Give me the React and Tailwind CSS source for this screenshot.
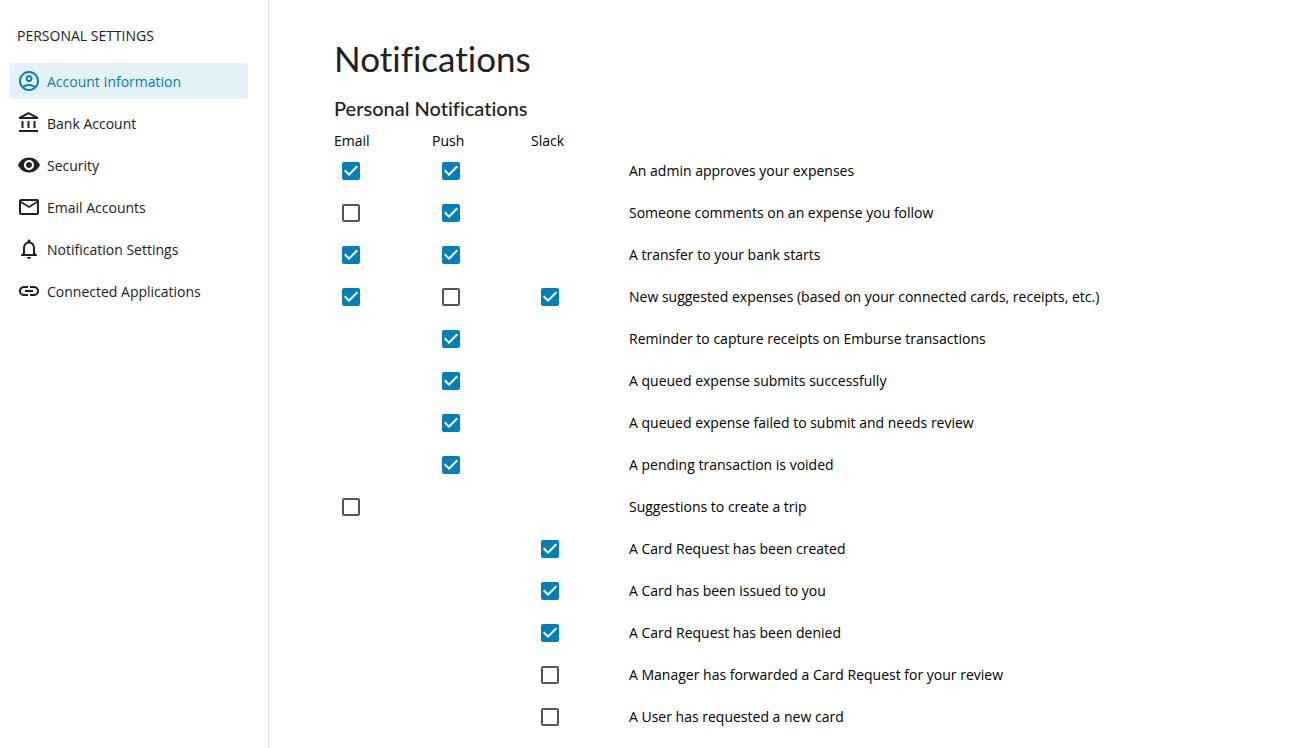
import React, { useState } from "react";
import {
  MdLink,
  MdNotificationsNone,
  MdOutlineAccountBalance,
  MdOutlineAccountCircle,
  MdOutlineEmail,
  MdVisibility,
} from "react-icons/md";

const navItems = [
  { label: "Account Information", icon: MdOutlineAccountCircle },
  { label: "Bank Account", icon: MdOutlineAccountBalance },
  { label: "Security", icon: MdVisibility },
  { label: "Email Accounts", icon: MdOutlineEmail },
  { label: "Notification Settings", icon: MdNotificationsNone },
  { label: "Connected Applications", icon: MdLink },
];

const channels = [
  { key: "email", label: "Email", head: "w-[98px]", cell: "pl-2" },
  { key: "push", label: "Push", head: "w-[99px]", cell: "pl-2.5" },
  { key: "slack", label: "Slack", head: "w-[98px]", cell: "pl-2.5" },
];

// a channel that is left out is not available for that notification
const initialSettings = [
  { label: "An admin approves your expenses", email: true, push: true },
  { label: "Someone comments on an expense you follow", email: false, push: true },
  { label: "A transfer to your bank starts", email: true, push: true },
  {
    label: "New suggested expenses (based on your connected cards, receipts, etc.)",
    email: true,
    push: false,
    slack: true,
  },
  { label: "Reminder to capture receipts on Emburse transactions", push: true },
  { label: "A queued expense submits successfully", push: true },
  { label: "A queued expense failed to submit and needs review", push: true },
  { label: "A pending transaction is voided", push: true },
  { label: "Suggestions to create a trip", email: false },
  { label: "A Card Request has been created", slack: true },
  { label: "A Card has been issued to you", slack: true },
  { label: "A Card Request has been denied", slack: true },
  { label: "A Manager has forwarded a Card Request for your review", slack: false },
  { label: "A User has requested a new card", slack: false },
];

const Checkbox = ({ label, checked, onChange }) => (
  <label className="grid h-[18px] w-[18px] cursor-pointer">
    <input
      type="checkbox"
      aria-label={label}
      checked={checked}
      onChange={onChange}
      className="col-start-1 row-start-1 h-[18px] w-[18px] cursor-pointer appearance-none rounded-[2px] border-2 border-[#555555] bg-white checked:border-[#007fb8] checked:bg-[#007fb8]"
    />
    {checked && (
      <svg
        className="pointer-events-none col-start-1 row-start-1 h-[18px] w-[18px]"
        viewBox="3 3 18 18"
        fill="white"
        aria-hidden="true"
      >
        <path d="M10 17l-5-5 1.41-1.41L10 14.17l7.59-7.59L19 8l-9 9z" />
      </svg>
    )}
  </label>
);

const Sidebar = () => {
  const [active, setActive] = useState("Account Information");

  return (
    <aside className="w-[269px] shrink-0 border-r border-[#dde3ec] pt-[26px] pr-5 pl-[9px] text-[#212121]">
      <h2 className="px-2 text-sm leading-5 uppercase">Personal Settings</h2>
      <nav className="mt-[17px] flex flex-col gap-1.5">
        {navItems.map(({ label, icon: Icon }) => (
          <a
            key={label}
            href="#"
            onClick={(e) => {
              e.preventDefault();
              setActive(label);
            }}
            className={`flex h-9 items-center gap-1.5 rounded-[3px] px-2 text-sm ${
              active === label ? "bg-[#e5f2f8] text-[#007fb8]" : "hover:bg-gray-50"
            }`}
          >
            <Icon size={24} className="shrink-0" />
            <span className="pt-0.5 leading-5">{label}</span>
          </a>
        ))}
      </nav>
    </aside>
  );
};

const App = () => {
  const [settings, setSettings] = useState(initialSettings);

  const toggle = (index, key) => {
    setSettings(
      settings.map((item, i) => (i === index ? { ...item, [key]: !item[key] } : item))
    );
  };

  return (
    <div className="flex min-h-screen bg-white font-['Open_Sans',sans-serif]">
      <Sidebar />
      <main className="min-w-0 flex-1 px-[65px] pt-9">
        <h1 className="font-['Lato',sans-serif] text-[35px] leading-11 text-[#212121] [font-variant-ligatures:none]">
          Notifications
        </h1>
        <h2 className="mt-4 font-['Lato',sans-serif] text-xl leading-6 font-medium text-[#212121] [font-variant-ligatures:none]">
          Personal Notifications
        </h2>
        <table className="mt-3 w-full table-fixed text-left text-sm leading-[18px] text-black">
          <thead>
            <tr>
              {channels.map(({ key, label, head }) => (
                <th key={key} scope="col" className={`${head} font-normal`}>
                  {label}
                </th>
              ))}
              <td />
            </tr>
          </thead>
          <tbody>
            {settings.map((item, i) => (
              <tr key={item.label} className="h-[42px]">
                {channels.map(({ key, label, cell }) => (
                  <td key={key} className={cell}>
                    {item[key] !== undefined && (
                      <Checkbox
                        label={`${label}: ${item.label}`}
                        checked={item[key]}
                        onChange={() => toggle(i, key)}
                      />
                    )}
                  </td>
                ))}
                <td>{item.label}</td>
              </tr>
            ))}
          </tbody>
        </table>
      </main>
    </div>
  );
};

export default App;
